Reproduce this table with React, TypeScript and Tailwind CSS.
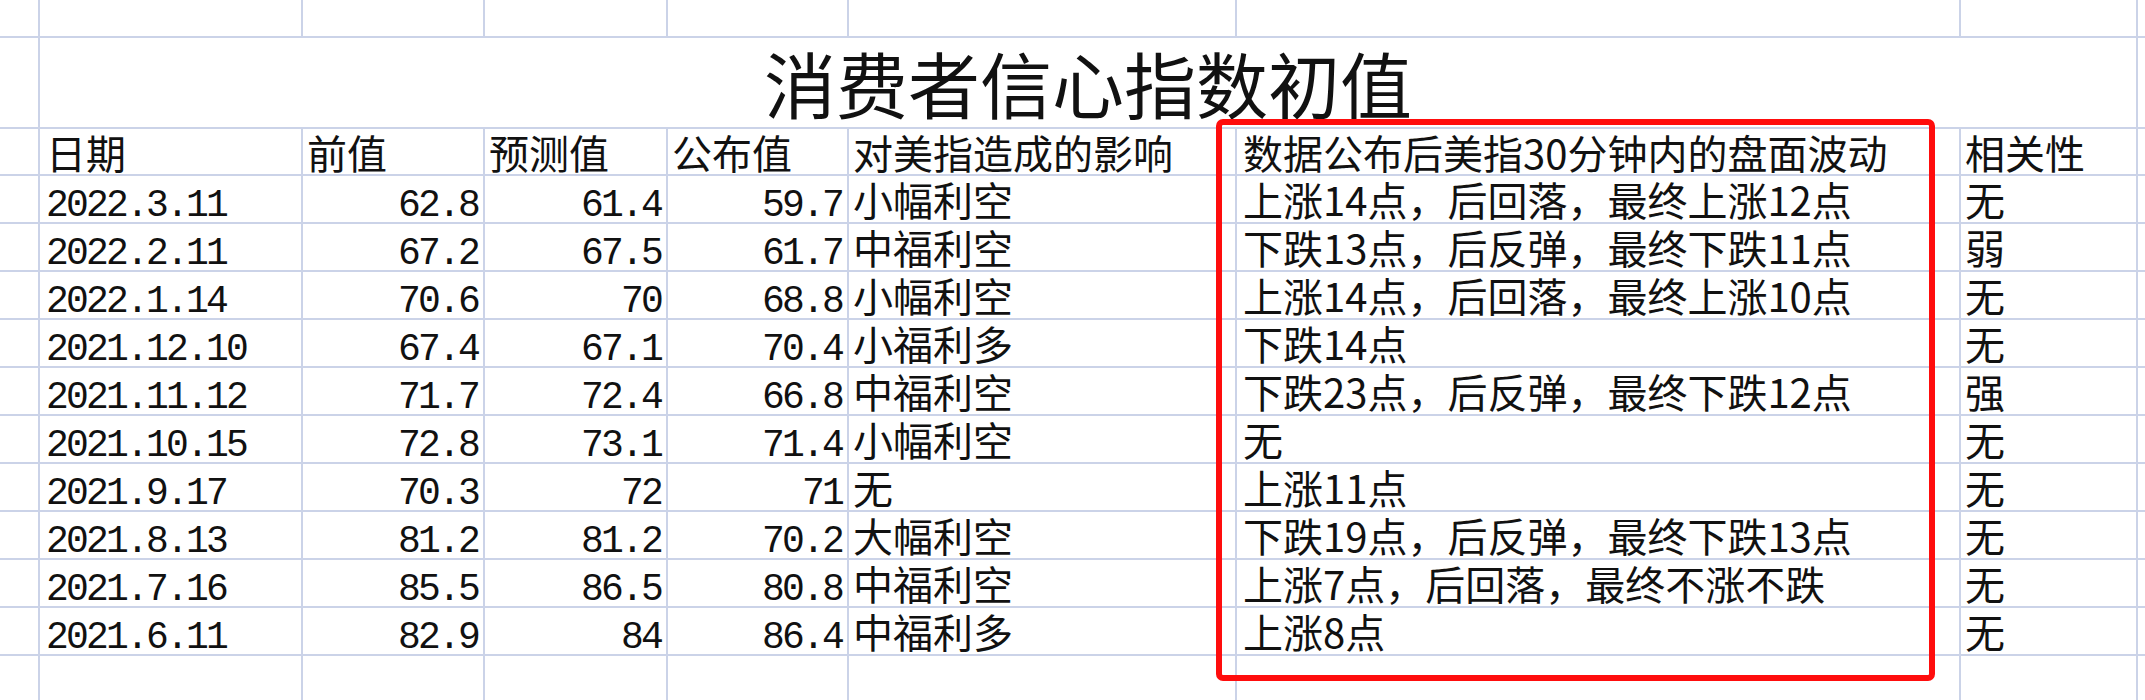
import React from "react";

type Row = {
  date: string;
  prev: string;
  fore: string;
  pub: string;
  impact: string;
  move: string;
  rel: string;
};

const rows: Row[] = [
  { date: "2022.3.11", prev: "62.8", fore: "61.4", pub: "59.7", impact: "小幅利空", move: "上涨14点，后回落，最终上涨12点", rel: "无" },
  { date: "2022.2.11", prev: "67.2", fore: "67.5", pub: "61.7", impact: "中福利空", move: "下跌13点，后反弹，最终下跌11点", rel: "弱" },
  { date: "2022.1.14", prev: "70.6", fore: "70", pub: "68.8", impact: "小幅利空", move: "上涨14点，后回落，最终上涨10点", rel: "无" },
  { date: "2021.12.10", prev: "67.4", fore: "67.1", pub: "70.4", impact: "小福利多", move: "下跌14点", rel: "无" },
  { date: "2021.11.12", prev: "71.7", fore: "72.4", pub: "66.8", impact: "中福利空", move: "下跌23点，后反弹，最终下跌12点", rel: "强" },
  { date: "2021.10.15", prev: "72.8", fore: "73.1", pub: "71.4", impact: "小幅利空", move: "无", rel: "无" },
  { date: "2021.9.17", prev: "70.3", fore: "72", pub: "71", impact: "无", move: "上涨11点", rel: "无" },
  { date: "2021.8.13", prev: "81.2", fore: "81.2", pub: "70.2", impact: "大幅利空", move: "下跌19点，后反弹，最终下跌13点", rel: "无" },
  { date: "2021.7.16", prev: "85.5", fore: "86.5", pub: "80.8", impact: "中福利空", move: "上涨7点，后回落，最终不涨不跌", rel: "无" },
  { date: "2021.6.11", prev: "82.9", fore: "84", pub: "86.4", impact: "中福利多", move: "上涨8点", rel: "无" },
];

const cell = "bg-white whitespace-nowrap";
const cjk = "font-['Noto_Sans_CJK_SC',sans-serif] text-[40px] leading-[40px] text-[#111111] pt-[3px]";
const mono = "font-['Liberation_Mono','Noto_Sans_CJK_SC',monospace] text-[38px] tracking-[-2.8px] text-[#111111]";

function Empty() {
  return <div className={cell} />;
}

export default function App() {
  return (
    <div className="relative w-[2145px] h-[700px] overflow-hidden bg-white">
      <div className="grid w-[2145px] h-[700px] gap-[2px] bg-[#cbd3e8] grid-cols-[38px_261px_180px_181px_179px_386px_722px_175px_1fr] grid-rows-[36px_89px_45px_repeat(10,46px)_1fr]">
        {/* top partial row */}
        {Array.from({ length: 9 }).map((_, i) => (
          <Empty key={"t" + i} />
        ))}

        {/* title row */}
        <Empty />
        <div className={`${cell} col-span-7 flex justify-center pt-[8px] font-['Noto_Sans_CJK_SC',sans-serif] text-[72px] leading-[72px] text-[#111111]`}>
          消费者信心指数初值
        </div>
        <Empty />

        {/* header row */}
        <Empty />
        <div className={`${cell} ${cjk} pl-[6px]`}>日期</div>
        <div className={`${cell} ${cjk} pl-[4px]`}>前值</div>
        <div className={`${cell} ${cjk} pl-[4px]`}>预测值</div>
        <div className={`${cell} ${cjk} pl-[4px]`}>公布值</div>
        <div className={`${cell} ${cjk} pl-[4px]`}>对美指造成的影响</div>
        <div className={`${cell} ${cjk} pl-[6px]`}>数据公布后美指30分钟内的盘面波动</div>
        <div className={`${cell} ${cjk} pl-[4px]`}>相关性</div>
        <Empty />

        {rows.map((r, i) => (
          <React.Fragment key={i}>
            <Empty />
            <div className={`${cell} ${cjk} pl-[6px]`}>
              <span className={mono}>{r.date}</span>
            </div>
            <div className={`${cell} ${cjk} text-right pr-[5px]`}>
              <span className={mono}>{r.prev}</span>
            </div>
            <div className={`${cell} ${cjk} text-right pr-[5px]`}>
              <span className={mono}>{r.fore}</span>
            </div>
            <div className={`${cell} ${cjk} text-right pr-[5px]`}>
              <span className={mono}>{r.pub}</span>
            </div>
            <div className={`${cell} ${cjk} pl-[4px]`}>{r.impact}</div>
            <div className={`${cell} ${cjk} pl-[6px]`}>{r.move}</div>
            <div className={`${cell} ${cjk} pl-[4px]`}>{r.rel}</div>
            <Empty />
          </React.Fragment>
        ))}

        {/* bottom partial row */}
        {Array.from({ length: 9 }).map((_, i) => (
          <Empty key={"b" + i} />
        ))}
      </div>

      {/* red highlight box */}
      <div className="absolute left-[1216px] top-[119px] w-[719px] h-[562px] border-[6px] border-[#ff0d0d] rounded-[7px] pointer-events-none" />
    </div>
  );
}
